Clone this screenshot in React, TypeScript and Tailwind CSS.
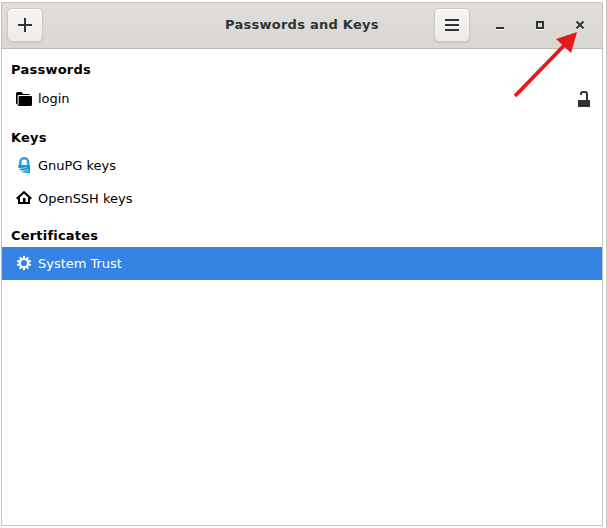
import type { ReactNode } from "react";

function FolderIcon() {
  return (
    <svg className="mb-px" width="16" height="16" viewBox="0 0 16 16">
      <path d="M0 3.5Q0 2 1.5 2H5.5L7 4H12.5Q14 4 14 5H3Q1.6 5 1.6 6.4V14.5Q0 14.5 0 13Z" fill="#000" />
      <path d="M4 6H15Q16 6 16 7V14.5Q16 16 14.5 16H1.2Q2.6 15.5 2.6 14V7.2Q2.6 6 4 6Z" fill="#000" />
    </svg>
  );
}

function GnuPGIcon() {
  return (
    <svg className="mb-px" width="16" height="16" viewBox="0 0 16 16">
      <path d="M4.3 9V5a3.9 3.7 0 0 1 7.8 0V8" fill="none" stroke="#26a5e9" strokeWidth="2.5" />
      <path d="M2.2 8H14V16H6L8.5 14.6L4.5 14.8L7 13L2.5 13.2L5 11.2L2.2 10.8Z" fill="#1597df" />
      <path d="M2 11.8Q7.5 11.6 11 10M3.5 13.9Q9 13.8 12.5 12.2M5 15.6Q10 15.4 13 14.2" fill="none" stroke="#fff" strokeOpacity="0.8" strokeWidth="0.6" />
    </svg>
  );
}

function HomeIcon() {
  return (
    <svg className="mb-px" width="16" height="16" viewBox="0 0 16 16" fill="none" stroke="#000" strokeWidth="2">
      <path d="M0.7 8.8L8 2.3L15.3 8.8" strokeWidth="2.2" />
      <path d="M3 7.5V13H13V7.5" />
      <path d="M7 13V8H9.5V13Z" fill="#000" stroke="none" />
    </svg>
  );
}

const TEETH = [0, 36, 72, 108, 144, 180, 216, 252, 288, 324];

function GearIcon() {
  return (
    <svg className="mb-px" width="16" height="16" viewBox="0 0 16 16">
      <circle cx="8" cy="8" r="4.2" fill="none" stroke="#fff" strokeWidth="2.2" />
      {TEETH.map((a) => (
        <path key={a} d="M6.8 3.6L7.1 0.8H8.9L9.2 3.6Z" fill="#fff" transform={`rotate(${a} 8 8)`} />
      ))}
    </svg>
  );
}

function UnlockIcon() {
  return (
    <svg className="mt-px" width="16" height="16" viewBox="0 0 16 16">
      <path d="M5 4V3Q5 1 7 1H9Q11 1 11 3V10" fill="none" stroke="#2e3436" strokeWidth="2" />
      <path d="M2 9.6Q2 9 2.6 9H13.4Q14 9 14 9.6V15.4Q14 16 13.4 16H2.6Q2 16 2 15.4Z" fill="#2e3436" />
    </svg>
  );
}

function Row({ icon, label, selected, end }: { icon: ReactNode; label: string; selected?: boolean; end?: ReactNode }) {
  return (
    <div className={`flex h-[33px] shrink-0 items-center pl-3.5 pr-2.5 ${selected ? "bg-[#3584e4] text-white" : "text-black"}`}>
      {icon}
      <span className="ml-1.5 grow tracking-[-0.02px]">{label}</span>
      {end}
    </div>
  );
}

function ToolButton({ children }: { children: ReactNode }) {
  return (
    <button className="flex h-[34px] w-9 items-center justify-center rounded-[5px] border border-[#cdc7c2] bg-linear-to-b from-[#f6f5f4] to-[#edebe9] shadow-[0_1px_2px_rgba(0,0,0,0.07),inset_0_1px_white]">
      {children}
    </button>
  );
}

export default function App() {
  return (
    <div className="relative h-[528px] w-[607px] overflow-hidden border-r border-[#cbc7c3] bg-white pl-px pt-0.5 font-['DejaVu_Sans',sans-serif] text-[13px] leading-4">
      <main className="flex h-[524px] w-[602px] flex-col border border-[#c4c3be]">
        <header className="flex h-[46px] shrink-0 items-center border-b border-[#bfb8b1] bg-linear-to-b from-[#e1dedb] to-[#dad6d2] pb-0.5 pl-[5px] pr-3.5 text-[#2e3436]">
          <ToolButton>
            <svg width="16" height="16" viewBox="0 0 16 16">
              <path d="M1 9.5H15" stroke="#fff" />
              <path d="M8 1V15M1 8H15" stroke="#2e3436" strokeWidth="2" />
            </svg>
          </ToolButton>
          <h1 className="ml-[182px] w-[209px] font-bold tracking-[0.26px]">Passwords and Keys</h1>
          <ToolButton>
            <svg width="16" height="16" viewBox="0 0 16 16">
              <path d="M1 3H15M1 8H15M1 13H15" stroke="#2e3436" strokeWidth="2" />
            </svg>
          </ToolButton>
          <div className="ml-auto flex gap-6">
            <svg width="16" height="16" viewBox="0 0 16 16">
              <path d="M4 12.5H12" stroke="#fff" />
              <path d="M4 11H12" stroke="#2e3436" strokeWidth="2" />
            </svg>
            <svg width="16" height="16" viewBox="0 0 16 16">
              <path d="M4 12.5H12" stroke="#fff" />
              <path d="M5 5H11V11H5Z" fill="none" stroke="#2e3436" strokeWidth="2" />
            </svg>
            <svg width="16" height="16" viewBox="0 0 16 16" fill="none" strokeWidth="2">
              <path d="M4.5 5.5L11.5 12.5M11.5 5.5L4.5 12.5" stroke="#fff" />
              <path d="M4.5 4.5L11.5 11.5M11.5 4.5L4.5 11.5" stroke="#2e3436" />
            </svg>
          </div>
        </header>
        <h2 className="h-[33px] shrink-0 pl-[9px] pt-[13px] font-bold tracking-[0.24px]">Passwords</h2>
        <Row icon={<FolderIcon />} label="login" end={<UnlockIcon />} />
        <h2 className="h-[34px] shrink-0 pl-[9px] pt-[15px] font-bold tracking-[0.2px]">Keys</h2>
        <Row icon={<GnuPGIcon />} label="GnuPG keys" />
        <Row icon={<HomeIcon />} label="OpenSSH keys" />
        <h2 className="h-8 shrink-0 pl-[9px] pt-[13px] font-bold tracking-[0.2px]">Certificates</h2>
        <Row icon={<GearIcon />} label="System Trust" selected />
      </main>
      <svg className="absolute left-[510px] top-[28px]" width="72" height="72" viewBox="510 28 72 72">
        <path d="M515 96L566 43.5" stroke="#e71a1a" strokeWidth="3.8" />
        <path d="M577 32L571 53L556 39Z" fill="#e71a1a" />
      </svg>
    </div>
  );
}
